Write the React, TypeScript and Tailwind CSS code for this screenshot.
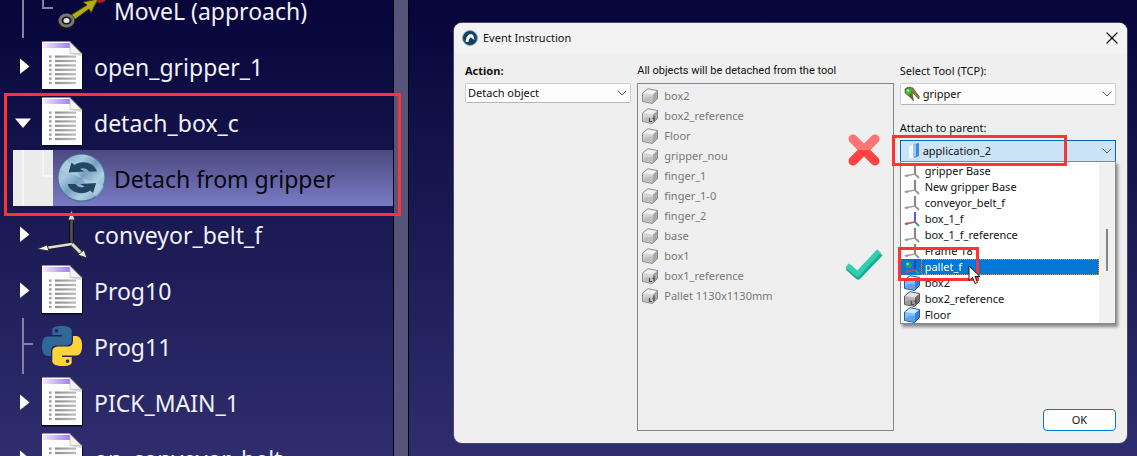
import React, { useState } from 'react'
import { clsx } from 'clsx'
import { ChevronDown, X } from 'lucide-react'

type TreeIcon = 'move' | 'program' | 'event' | 'frame' | 'python'

interface TreeNode {
  name: string
  icon: TreeIcon
  branch: 'closed' | 'open' | 'line' | 'child'
}

const nodesBefore: TreeNode[] = [
  { name: 'MoveL (approach)', icon: 'move', branch: 'child' },
  { name: 'open_gripper_1', icon: 'program', branch: 'closed' }
]

const nodesAfter: TreeNode[] = [
  { name: 'conveyor_belt_f', icon: 'frame', branch: 'closed' },
  { name: 'Prog10', icon: 'program', branch: 'closed' },
  { name: 'Prog11', icon: 'python', branch: 'line' },
  { name: 'PICK_MAIN_1', icon: 'program', branch: 'closed' },
  { name: 'on_conveyor_belt', icon: 'program', branch: 'closed' }
]

const objects = [
  { name: 'box2', linked: false },
  { name: 'box2_reference', linked: true },
  { name: 'Floor', linked: false },
  { name: 'gripper_nou', linked: false },
  { name: 'finger_1', linked: false },
  { name: 'finger_1-0', linked: false },
  { name: 'finger_2', linked: false },
  { name: 'base', linked: false },
  { name: 'box1', linked: false },
  { name: 'box1_reference', linked: true },
  { name: 'Pallet 1130x1130mm', linked: true }
]

type ParentIcon = 'frame' | 'frameColor' | 'frameActive' | 'box' | 'boxLinked'

const parents: { name: string; icon: ParentIcon }[] = [
  { name: 'gripper Base', icon: 'frame' },
  { name: 'New gripper Base', icon: 'frame' },
  { name: 'conveyor_belt_f', icon: 'frame' },
  { name: 'box_1_f', icon: 'frameColor' },
  { name: 'box_1_f_reference', icon: 'frame' },
  { name: 'Frame 18', icon: 'frame' },
  { name: 'pallet_f', icon: 'frameActive' },
  { name: 'box2', icon: 'box' },
  { name: 'box2_reference', icon: 'boxLinked' },
  { name: 'Floor', icon: 'box' }
]

const PYTHON_SNAKE =
  'M14.25.18l.9.2.73.26.59.3.45.32.34.34.25.34.16.33.1.3.04.26.02.2-.01.13V8.5l-.05.63-.13.55-.21.46-.26.38-.3.31-.33.25-.35.19-.35.14-.33.1-.3.07-.26.04-.21.02H8.77l-.69.05-.59.14-.5.22-.41.27-.33.32-.27.35-.2.36-.15.37-.1.35-.07.32-.04.27-.02.21v3.06H3.17l-.21-.03-.28-.07-.32-.12-.35-.18-.36-.26-.36-.36-.35-.46-.32-.59-.28-.73-.21-.88-.14-1.05-.05-1.23.06-1.22.16-1.04.24-.87.32-.71.36-.57.4-.44.42-.33.42-.24.4-.16.36-.1.32-.05.24-.01h.16l.06.01h8.16v-.83H6.18l-.01-2.75-.02-.37.05-.34.11-.31.17-.28.25-.26.31-.23.38-.2.44-.18.51-.15.58-.12.64-.1.71-.06.77-.04.84-.02 1.27.05zm-6.3 1.98l-.23.33-.08.41.08.41.23.34.33.22.41.09.41-.09.33-.22.23-.34.08-.41-.08-.41-.23-.33-.33-.22-.41-.09-.41.09z'

const EVENT_ARROW = 'M10.5 18.5L13.5 8.5L16.5 11C23 6 36 8 39 17.5H31C29 14 25 13.500 22 15L26.5 17.500Z'

const ProgramIcon = () => (
  <svg viewBox="0 0 42 50" className="h-[50px] w-[42px]">
    <defs>
      <linearGradient id="docHead" x1="0" x2="1">
        <stop offset="0" stopColor="#f3e8fd" />
        <stop offset="1" stopColor="#a17bfa" />
      </linearGradient>
      <linearGradient id="docLine" x1="0" x2="1">
        <stop offset="0" stopColor="#8f8f8f" />
        <stop offset="1" stopColor="#bdbdbd" />
      </linearGradient>
    </defs>
    <path d="M1 1H29.500L42 14V49.500H1Z" fill="#0b0b20" />
    <path d="M1 .5H29L41 12.500V48H1Z" fill="#fdfdfd" />
    <path d="M2 2H29V7H2Z" fill="url(#docHead)" />
    <path d="M29 .5L41 12.500H29Z" fill="#f2f2f2" />
    <path d="M29 12.500H40.500V15L29 13Z" fill="#d5d5d5" />
    <path d="M29 1V12.500H40.500" fill="none" stroke="#c4c4c4" strokeWidth=".8" />
    <path d="M29 .5L41 12.500" stroke="#333348" />
    {[0, 1, 2, 3, 4, 5, 6].map((i) => (
      <g key={i}>
        <rect x="8" y={14.5 + i * 4.4} width="2.500" height="2.200" fill="#999" />
        <rect x="14" y={14.5 + i * 4.4} width="21" height="2.200" fill="url(#docLine)" />
      </g>
    ))}
  </svg>
)

const EventIcon = () => (
  <svg viewBox="0 0 48 48" className="size-12">
    <defs>
      <linearGradient id="disc" x1="0" x2="1" y2="1">
        <stop offset="0" stopColor="#78a2bf" />
        <stop offset=".3" stopColor="#a9cbdf" />
        <stop offset=".5" stopColor="#749fbf" />
        <stop offset=".7" stopColor="#b0cee4" />
        <stop offset="1" stopColor="#6f99ba" />
      </linearGradient>
    </defs>
    <circle cx="24" cy="24" r="24" fill="#48779c" />
    <circle cx="23.500" cy="23.500" r="23" fill="url(#disc)" />
    <path d="M24 24L2 16A24 24 0 0 1 9 6Z" fill="#bdd9e7" opacity=".5" />
    <path d="M24 24L46 32A24 24 0 0 1 38 43Z" fill="#bdd9e7" opacity=".5" />
    <path d={EVENT_ARROW} fill="#234762" />
    <path d={EVENT_ARROW} fill="#234762" transform="rotate(180 24.300 23.800)" />
  </svg>
)

const AxesIcon = () => (
  <svg viewBox="0 0 52 52" className="size-[52px] shrink-0">
    <path d="M35.500 36V12" stroke="#111" strokeWidth="5" />
    <path d="M35.500 36V12" stroke="#555" strokeWidth="2.500" />
    <path d="M35.500 2L39 12H32Z" fill="#ddd" stroke="#333" />
    <path d="M36 36L10 40" stroke="#222" strokeWidth="4.500" />
    <path d="M36 36L10 40" stroke="#ddd" strokeWidth="2.500" />
    <path d="M1 41L11 37L13 43Z" fill="#f5f5f5" stroke="#333" />
    <path d="M36 36L45 45" stroke="#333" strokeWidth="5.500" />
    <path d="M36 36L45 45" stroke="#ddd" strokeWidth="3" />
    <path d="M42 47L48 42L51 50Z" fill="#eee" stroke="#333" />
  </svg>
)

const MoveIcon = () => (
  <svg viewBox="0 0 50 56" className="h-14 w-[50px] shrink-0">
    <ellipse cx="42" cy="17" rx="7" ry="4" fill="#b51b2c" stroke="#222" />
    <path d="M14 33L30 23L26 20L41 17L34 31L32 27L17 38Z" fill="#b3ac0c" stroke="#3f3c0a" />
    <ellipse cx="9.500" cy="39.500" rx="9" ry="8" fill="#161616" />
    <ellipse cx="9.500" cy="38.500" rx="6.500" ry="5.500" fill="none" stroke="#777" strokeWidth="3" />
    <ellipse cx="9.500" cy="38.500" rx="3" ry="2.500" fill="#eee" />
  </svg>
)

const PythonIcon = () => (
  <svg viewBox="0 0 24 24" className="size-10">
    <path d={PYTHON_SNAKE} fill="#306998" />
    <path d={PYTHON_SNAKE} fill="#ffd43b" transform="rotate(180 12 12)" />
  </svg>
)

const treeIcons: Record<TreeIcon, React.ReactNode> = {
  move: <MoveIcon />,
  program: <ProgramIcon />,
  event: <EventIcon />,
  frame: <AxesIcon />,
  python: <PythonIcon />
}

/** Left gutter of a tree row: expander arrow or connecting lines */
const Branch: React.FC<{ kind: TreeNode['branch'] }> = ({ kind }) => (
  <svg
    viewBox={kind === 'child' ? '0 0 58 56' : '0 0 38 56'}
    className={clsx('h-14 shrink-0', kind === 'child' ? 'w-[58px]' : 'w-[38px]')}
  >
    {kind === 'closed' && <path d="M20 20.500L29.500 28.500L20 36Z" fill="#fff" />}
    {kind === 'open' && <path d="M15 24.500H31L23 34Z" fill="#fff" />}
    {kind === 'line' && (
      <path d="M23 0V56M23 26H33" fill="none" stroke="#8280a4" strokeWidth="2" />
    )}
    {kind === 'child' && (
      <path d="M23 0V56M43 0V26H53" fill="none" stroke="#8280a4" strokeWidth="2" />
    )}
  </svg>
)

const TreeRow: React.FC<{ node: TreeNode }> = ({ node }) => (
  <li role="treeitem" className="flex h-14 items-center">
    <Branch kind={node.branch} />
    <span className="flex w-12 shrink-0 items-center justify-center">{treeIcons[node.icon]}</span>
    <span className="pt-0.5 pl-2 whitespace-nowrap">{node.name}</span>
  </li>
)

const BoxIcon: React.FC<{ tone: 'gray' | 'blue' | 'dark'; linked?: boolean }> = ({ tone, linked }) => {
  const [top, front, side, edge] = {
    gray: ['#f0f0f0', '#d4d4d4', '#a8a8a8', '#8c8c8c'],
    blue: ['#d4ebff', '#7fc0fc', '#2f84e0', '#275c96'],
    dark: ['#e4e4e4', '#b5b5b5', '#767676', '#5c5c5c']
  }[tone]

  return (
    <svg viewBox="0 0 16 16" className="size-4 shrink-0">
      <path d="M.5 5L6 .7L15.500 2.500V10.500L10.500 15.500L.5 13.500Z" fill={front} />
      <path d="M.5 5L6 .7L15.500 2.500L11 6.500Z" fill={top} />
      <path d="M11 6.500L15.500 2.500V10.500L10.500 15.500Z" fill={side} />
      <path d="M1 13Q2 8 10.500 9V15Z" fill={side} opacity=".45" />
      <path d="M.5 5L6 .7L15.500 2.500V10.500L10.500 15.500L.5 13.500Z" fill="none" stroke={edge} />
      {linked && (
        <path d="M7.500 10V13.500H10M12 7.500V13M10.500 10.500H13" fill="none" stroke="#4c4c4c" strokeWidth="1.200" />
      )}
    </svg>
  )
}

const SmallFrameIcon: React.FC<{ colored?: boolean; active?: boolean }> = ({ colored, active }) => (
  <svg viewBox="0 0 16 16" className="size-4 shrink-0">
    <path d="M11 11V1" stroke={colored ? '#3333e0' : '#666'} strokeWidth="1.600" />
    <path d="M11 11L1 13" stroke={colored ? '#d8404e' : '#a5a5a5'} strokeWidth="1.600" />
    <path d="M0 13L4 11V14Z" fill={colored ? '#d8404e' : '#999'} />
    <path d="M11 11L15 15" stroke={colored ? '#2ea275' : '#999'} strokeWidth="2" />
    {active && <circle cx="4.500" cy="6" r="3.200" fill="#2f9c65" />}
    {active && <circle cx="3.700" cy="5" r="1.200" fill="#8ee0a5" />}
  </svg>
)

const parentIcons: Record<ParentIcon, React.ReactNode> = {
  frame: <SmallFrameIcon />,
  frameColor: <SmallFrameIcon colored />,
  frameActive: <SmallFrameIcon colored active />,
  box: <BoxIcon tone="blue" />,
  boxLinked: <BoxIcon tone="dark" linked />
}

const GripperIcon = () => (
  <svg viewBox="0 0 16 16" className="size-4">
    <path d="M5 1L9 2L15.500 11L14.500 13L9 7L6 4Z" fill="#8a8040" stroke="#4f4820" strokeWidth=".6" />
    <path d="M1 3L4 1L8 6L9.500 15L6 11L1 7Z" fill="#71672b" stroke="#4f4820" strokeWidth=".6" />
    <circle cx="4.500" cy="5.500" r="3" fill="#36c43a" />
    <circle cx="4" cy="4.500" r="1.200" fill="#a5f59a" />
  </svg>
)

const StationIcon = () => (
  <svg viewBox="0 0 16 16" className="size-4">
    <path d="M10 1L15 0V13L10 15Z" fill="#3b8ce0" />
    <path d="M7 2L12 1V13L8 15Z" fill="#9cc8f1" />
    <path d="M5 4L9 1V15H5Z" fill="#f4f7fa" />
  </svg>
)

interface SelectFieldProps {
  id: string
  value: string
  options: string[]
  icon?: React.ReactNode
  open?: boolean
  onChange: (value: string) => void
}

const SelectField: React.FC<SelectFieldProps> = ({ id, value, options, icon, open, onChange }) => (
  <div className="relative">
    <select
      id={id}
      value={value}
      onChange={(e) => onChange(e.target.value)}
      className={clsx(
        'block w-full appearance-none border pr-6 outline-none',
        icon ? 'h-[22px] pl-[22px]' : 'h-5 pl-[2px]',
        open ? 'border-[#0067b8] bg-[#cce4f7]' : 'rounded-xs border-[#cfcfcf] border-b-[#b5b5b5] bg-[#fdfdfd]'
      )}
    >
      {options.map((option) => (
        <option key={option}>{option}</option>
      ))}
    </select>
    {icon && <span className="pointer-events-none absolute top-[3px] left-1">{icon}</span>}
    <ChevronDown
      strokeWidth={1.5}
      className="pointer-events-none absolute inset-y-0 right-px my-auto size-4 text-[#555]"
    />
  </div>
)

const Cursor = () => (
  <svg viewBox="0 0 13 20" className="absolute top-[6px] left-[67px] z-20 h-5 w-[13px]">
    <path
      d="M1 1V15.500L4.500 12.500L7 18.500L9.500 17.500L7 11.500H12Z"
      fill="#fff"
      stroke="#1b1b1b"
      strokeWidth="1"
    />
  </svg>
)

const StationTree = () => (
  <aside className="flex w-[409px] shrink-0 text-[23px] leading-8 text-[#f1f1f6]">
    <ul role="tree" className="-mt-[18px] min-w-0 flex-1">
      {nodesBefore.map((node) => (
        <TreeRow key={node.name} node={node} />
      ))}
      <li role="none" className="relative z-10">
        <ul role="group">
          <TreeRow node={{ name: 'detach_box_c', icon: 'program', branch: 'open' }} />
          <li
            role="treeitem"
            aria-selected="true"
            className="ml-[13px] flex h-14 items-center bg-linear-to-b from-[#4c4a80] to-[#7a7bc6] text-[#08080f]"
          >
            <svg viewBox="0 0 40 56" className="h-14 w-10 shrink-0 bg-[#ececec]">
              <path d="M10 0V56M30 0V26H40" fill="none" stroke="#f5f5f5" strokeWidth="2" />
            </svg>
            <span className="ml-[5px] shrink-0">{treeIcons.event}</span>
            <span className="pt-0.5 pl-2 whitespace-nowrap">Detach from gripper</span>
          </li>
        </ul>
        <span className="pointer-events-none absolute -top-px -right-2 -bottom-[10px] left-1 border-3 border-[#ff3333]" />
      </li>
      {nodesAfter.map((node) => (
        <TreeRow key={node.name} node={node} />
      ))}
    </ul>
    <div className="w-4 border-x border-black bg-[#56547b]" />
  </aside>
)

const EventDialog = () => {
  const [action, setAction] = useState('Detach object')
  const [tool, setTool] = useState('gripper')
  const [parent, setParent] = useState('application_2')

  return (
    <section
      role="dialog"
      aria-labelledby="dialog-title"
      className="mt-[23px] mr-[10px] mb-[13px] ml-[45px] flex min-w-0 flex-1 flex-col rounded-lg bg-[#efefef] text-[11px] leading-4 text-[#111] shadow-[0_0_0_1px_#4a4868]"
    >
      <header className="flex h-[30px] items-center rounded-t-lg bg-[#f3f3f3] pr-[5px] pl-2">
        <svg viewBox="0 0 16 16" className="size-4">
          <circle cx="8" cy="8" r="7.500" fill="#123f63" stroke="#8fabbc" />
          <path d="M3.500 12C4 7 6 4 9 4C11 4 12 6 12.500 10L10 8.500C9 6.500 7 8 6.500 12Z" fill="#f1f6f9" />
        </svg>
        <h1 id="dialog-title" className="ml-[5px] flex-1 text-[11px]">
          Event Instruction
        </h1>
        <button type="button" aria-label="Close">
          <X strokeWidth={1.5} className="size-5" />
        </button>
      </header>

      <div className="grid flex-1 grid-cols-[166fr_256fr_216fr] gap-x-[6px] px-[11px] pt-[10px] pb-3">
        <div>
          <label htmlFor="action" className="mb-1 block font-bold">
            Action:
          </label>
          <SelectField
            id="action"
            value={action}
            options={['Detach object', 'Attach object']}
            onChange={setAction}
          />
        </div>

        <div className="relative flex flex-col">
          <h2 className="mb-1 font-['Roboto',sans-serif] whitespace-nowrap">
            All objects will be detached from the tool
          </h2>
          <ul className="flex-1 border border-[#828790] pt-[2px] pl-1 text-[#777]">
            {objects.map((object) => (
              <li key={object.name} className="flex h-5 items-center gap-[6px]">
                <BoxIcon tone="gray" linked={object.linked} />
                {object.name}
              </li>
            ))}
          </ul>
          <svg viewBox="0 0 32 32" className="absolute top-[71px] right-[14px] size-8">
            <path d="M5 5L16 16L27 5" fill="none" stroke="#ff7474" strokeWidth="9" strokeLinecap="round" />
            <path d="M5 27L16 16L27 27" fill="none" stroke="#ff4343" strokeWidth="9" strokeLinecap="round" />
            <path d="M9.500 16L16 9.500L22.500 16Z" fill="#ff7474" />
          </svg>
          <svg viewBox="0 0 40 32" className="absolute top-[185px] right-[10px] h-8 w-10">
            <path
              d="M4 19L14 28L36 5"
              fill="none"
              stroke="#12b193"
              strokeWidth="7"
              strokeLinejoin="round"
            />
            <path d="M3 17.500L13.500 26L35 3" fill="none" stroke="#34cdad" strokeWidth="5" />
          </svg>
        </div>

        <div className="flex flex-col">
          <label htmlFor="tool" className="mb-1 block">
            Select Tool (TCP):
          </label>
          <SelectField id="tool" value={tool} options={['gripper']} icon={<GripperIcon />} onChange={setTool} />
          <label htmlFor="parent" className="mt-[15px] mb-1 block">
            Attach to parent:
          </label>
          <div className="relative">
            <SelectField
              id="parent"
              value={parent}
              options={['application_2', ...parents.map((item) => item.name)]}
              icon={<StationIcon />}
              open
              onChange={setParent}
            />
            <div className="absolute inset-x-0 top-[21px] flex border border-[#828790] bg-white pt-px shadow-[2px_3px_3px_#888]">
              <ul role="listbox" aria-label="Attach to parent" className="min-w-0 flex-1">
                {parents.map((item) => {
                  const selected = item.name === 'pallet_f'
                  return (
                    <li
                      key={item.name}
                      role="option"
                      aria-selected={selected}
                      className={clsx('relative flex h-4 items-center pl-[3px]', selected && 'bg-[#0078d7] text-white')}
                    >
                      {parentIcons[item.icon]}
                      <span
                        className={clsx(
                          'ml-px flex h-4 flex-1 items-center pl-1',
                          selected && 'outline-1 -outline-offset-1 outline-dotted outline-[#e89040]'
                        )}
                      >
                        {item.name}
                      </span>
                      {selected && (
                        <span className="pointer-events-none absolute -top-3 -left-[3px] z-10 h-[34px] w-[81px] border-3 border-[#ff3333]" />
                      )}
                      {selected && <Cursor />}
                    </li>
                  )
                })}
              </ul>
              <div className="flex w-4 justify-center bg-[#f0f0f0] pt-[66px]">
                <div className="h-[42px] w-[2px] bg-[#858585]" />
              </div>
            </div>
            <span className="pointer-events-none absolute -top-[5px] -left-[8px] h-[31px] w-[175px] border-3 border-[#ff3333]" />
          </div>
          <button
            type="button"
            className="mt-auto h-[22px] w-[73px] self-end rounded-sm border border-[#0078d4] bg-[#fdfdfd]"
          >
            OK
          </button>
        </div>
      </div>
    </section>
  )
}

export default function App() {
  return (
    <main className="flex h-screen overflow-hidden bg-linear-to-b from-[#07053a] via-[#1b1a54] to-[#2f2d6e] font-['Noto_Sans',sans-serif]">
      <StationTree />
      <EventDialog />
    </main>
  )
}
